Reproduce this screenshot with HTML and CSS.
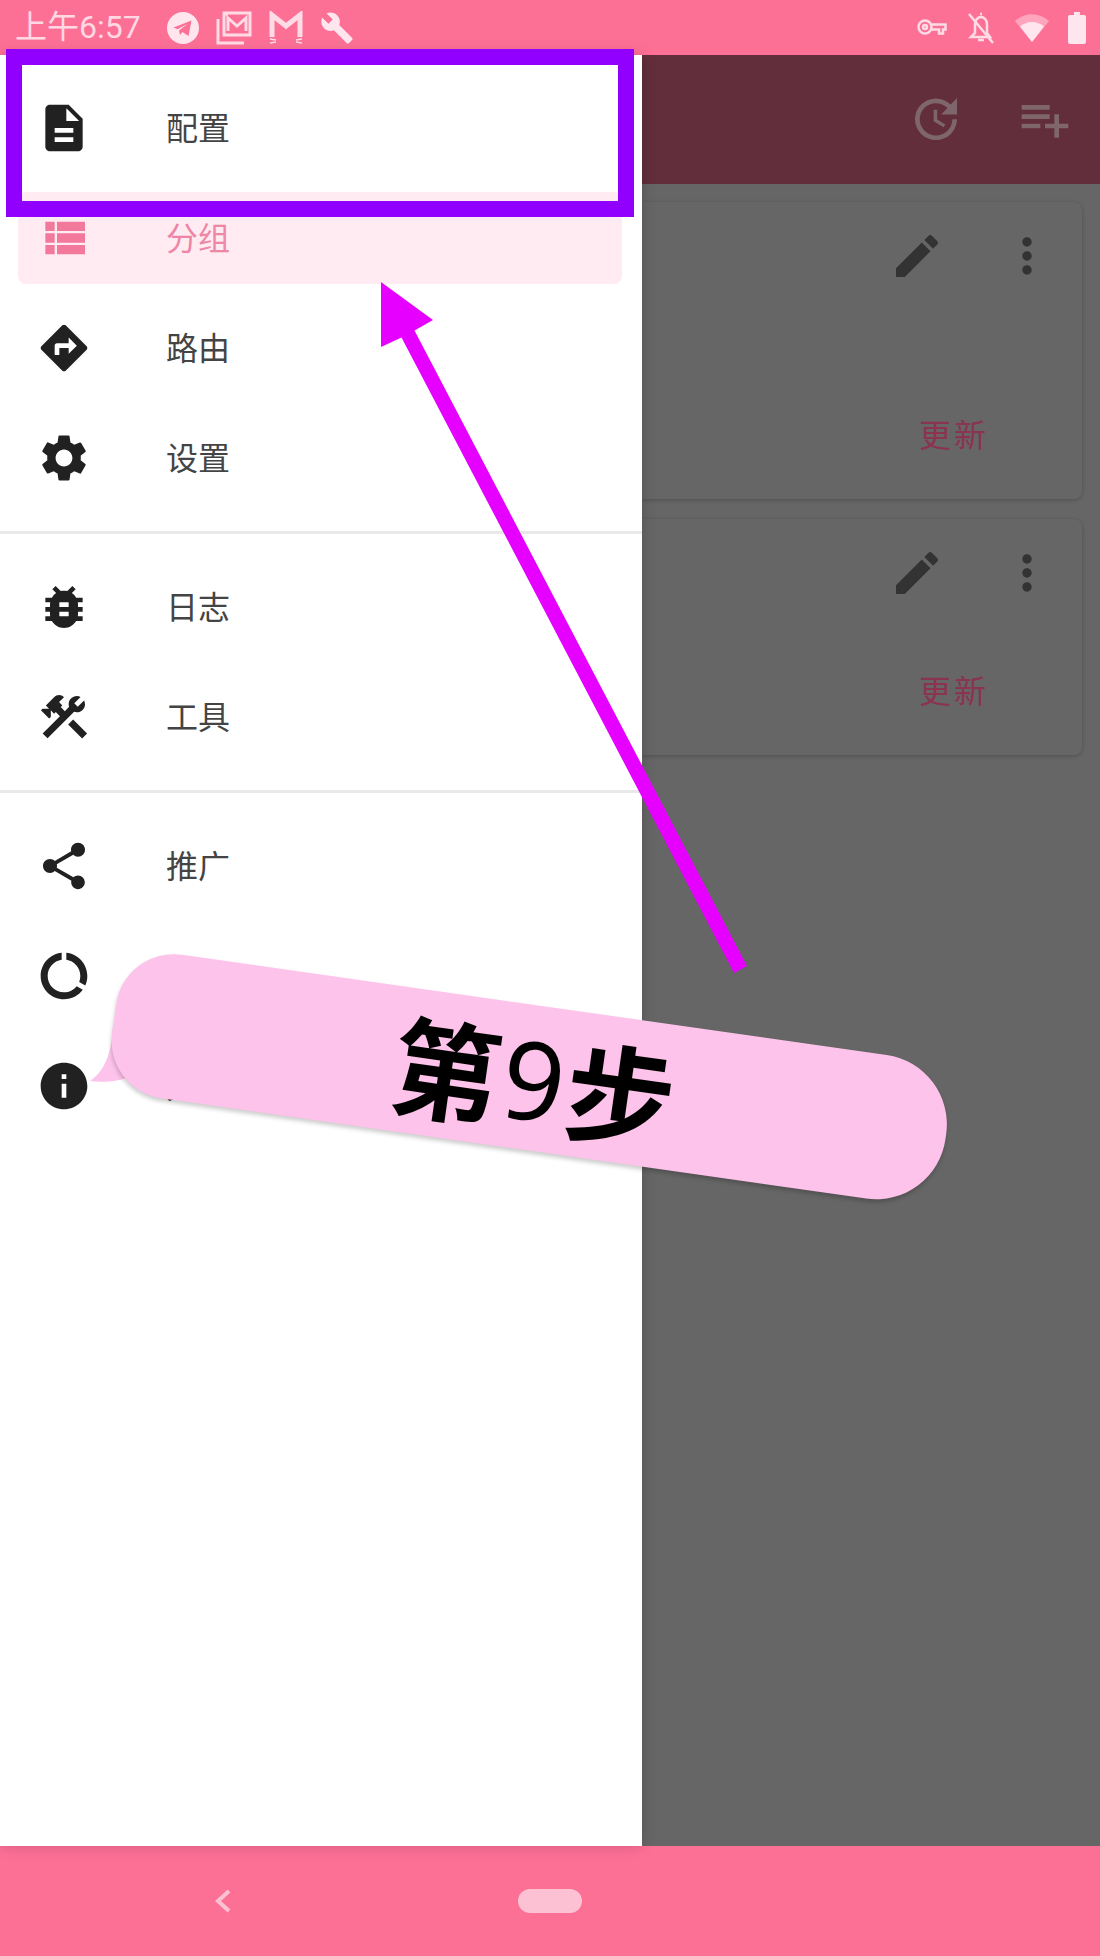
FILE: index.html
```html
<!DOCTYPE html>
<html lang="zh-CN">
<head>
  <meta charset="UTF-8">
  <meta name="viewport" content="width=device-width, initial-scale=1.0">
  <title>配置</title>
  <link rel="stylesheet" href="styles.css">
</head>
<body>

  <!-- status bar -->
  <div class="status-bar">
    <span class="clock">上午6:57</span>
    <div class="status-left">
      <svg class="st-icon" width="32" height="32" viewBox="0 0 32 32"><path fill-rule="evenodd" d="M16 0a16 16 0 1 0 0 32a16 16 0 1 0 0-32z M6.500 15.500 L24.500 8.500 L21.500 24 L15.500 20 L13 23 L12 18.500 L20.500 12 L10.500 17.200 Z"/></svg>
      <svg class="st-line" width="36" height="34" viewBox="0 0 36 34"><path d="M8 2h26v22H8zM8 3l4 0M12 20V7l9 8 9-8v13"/><path d="M2 8v24h26"/></svg>
      <svg class="st-line st-cat" width="34" height="34" viewBox="0 0 34 34"><path d="M3 26V4l14 11L31 4v22"/><path class="thin" d="M1 28l6 1M1 32l6-1M27 29l6-1M27 31l6 1"/></svg>
      <svg class="st-icon" width="34" height="34" viewBox="0 0 24 24"><path d="M22.700 19l-9.100-9.100c.9-2.300.4-5-1.500-6.900-2-2-5-2.400-7.400-1.300L9 6 6 9 1.600 4.700C.4 7.100.9 10.100 2.900 12.100c1.900 1.900 4.600 2.400 6.900 1.500l9.100 9.100c.4.4 1 .4 1.400 0l2.300-2.300c.5-.4.5-1.100.1-1.400z"/></svg>
    </div>
    <div class="status-right">
      <svg class="st-line st-key" width="30" height="20" viewBox="0 0 30 20"><circle cx="8" cy="9" r="6.500"/><circle cx="8" cy="9" r="2"/><path d="M14 6.500h14.500v5H26v4h-4v-4h-8"/></svg>
      <svg class="st-line st-bell" width="30" height="32" viewBox="0 0 30 32"><path d="M5 25h19l-3-4V12c0-4-3-7-6-7s-6 3-6 7v9zM12 28h6M14 2h2M3 2l24 29"/></svg>
      <svg class="st-wifi" width="34" height="28" viewBox="0 0 34 28"><path class="dim" d="M0 7C10-2 24-2 34 7L17 28z"/><path d="M5 12.500C12 6.500 22 6.500 29 12.500L17 28z"/></svg>
      <svg class="st-icon" width="18" height="32" viewBox="0 0 18 32"><path d="M6 0h6v3h4a2 2 0 0 1 2 2v25a2 2 0 0 1-2 2H2a2 2 0 0 1-2-2V5a2 2 0 0 1 2-2h4z"/></svg>
    </div>
  </div>

  <div class="main">

    <!-- drawer -->
    <div class="drawer">
      <div class="nav-section">
        <div class="nav-item">
          <svg class="nav-icon" viewBox="0 0 24 24"><path d="M14 2H6c-1.100 0-1.990.9-1.990 2L4 20c0 1.100.89 2 1.990 2H18c1.100 0 2-.9 2-2V8l-6-6zm2 16H8v-2h8v2zm0-4H8v-2h8v2zm-3-5V3.500L18.500 9H13z"/></svg>
          <span>配置</span>
        </div>
        <div class="nav-item active">
          <svg class="nav-icon" viewBox="0 0 24 24"><path d="M4 14h4v-4H4v4zm0 5h4v-4H4v4zM4 9h4V5H4v4zm5 5h12v-4H9v4zm0 5h12v-4H9v4zM9 5v4h12V5H9z"/></svg>
          <span>分组</span>
        </div>
        <div class="nav-item">
          <svg class="nav-icon" viewBox="0 0 24 24"><path d="M21.710 11.290l-9-9c-.39-.39-1.020-.39-1.410 0l-9 9c-.39.39-.39 1.020 0 1.410l9 9c.39.39 1.020.39 1.410 0l9-9c.39-.38.39-1.010 0-1.410zM14 14.500V12h-4v3H8v-4c0-.55.45-1 1-1h5V7.500l3.500 3.500-3.500 3.500z"/></svg>
          <span>路由</span>
        </div>
        <div class="nav-item">
          <svg class="nav-icon" viewBox="0 0 24 24"><path d="M19.140 12.940c.04-.3.06-.61.06-.94 0-.32-.02-.64-.07-.94l2.030-1.580c.18-.14.23-.41.12-.61l-1.920-3.320c-.12-.22-.37-.29-.59-.22l-2.390.96c-.5-.38-1.030-.7-1.620-.94l-.36-2.540c-.04-.24-.24-.41-.48-.41h-3.840c-.24 0-.43.17-.47.41l-.36 2.540c-.59.24-1.130.57-1.620.94l-2.390-.96c-.22-.08-.47 0-.59.22L2.740 8.870c-.12.21-.08.47.12.61l2.030 1.580c-.05.3-.09.63-.09.94s.02.64.07.94l-2.030 1.580c-.18.14-.23.41-.12.61l1.920 3.320c.12.22.37.29.59.22l2.390-.96c.5.38 1.030.7 1.620.94l.36 2.540c.05.24.24.41.48.41h3.840c.24 0 .44-.17.47-.41l.36-2.540c.59-.24 1.130-.56 1.620-.94l2.390.96c.22.08.47 0 .59-.22l1.920-3.320c.12-.22.07-.47-.12-.61l-2.010-1.580zM12 15.600c-1.980 0-3.600-1.620-3.600-3.600s1.620-3.600 3.600-3.600 3.600 1.620 3.600 3.600-1.620 3.600-3.600 3.600z"/></svg>
          <span>设置</span>
        </div>
      </div>

      <div class="nav-section">
        <div class="nav-item">
          <svg class="nav-icon" viewBox="0 0 24 24"><path d="M20 8h-2.810c-.45-.78-1.070-1.450-1.820-1.960L17 4.410 15.590 3l-2.170 2.170C12.960 5.060 12.490 5 12 5c-.49 0-.96.06-1.410.17L8.410 3 7 4.410l1.620 1.630C7.880 6.550 7.260 7.220 6.810 8H4v2h2.090c-.05.33-.09.66-.09 1v1H4v2h2v1c0 .34.04.67.09 1H4v2h2.810c1.040 1.790 2.970 3 5.190 3s4.150-1.210 5.190-3H20v-2h-2.090c.05-.33.09-.66.09-1v-1h2v-2h-2v-1c0-.34-.04-.67-.09-1H20V8zm-6 8h-4v-2h4v2zm0-4h-4v-2h4v2z"/></svg>
          <span>日志</span>
        </div>
        <div class="nav-item">
          <svg class="nav-icon" viewBox="0 0 24 24"><path d="M13.783 15.172l2.121-2.121 5.996 5.996-2.121 2.121zM17.500 10c1.930 0 3.500-1.570 3.500-3.500 0-.58-.16-1.120-.41-1.600l-2.700 2.700-1.490-1.490 2.700-2.700c-.48-.25-1.020-.41-1.600-.41C15.570 3 14 4.570 14 6.500c0 .41.08.8.21 1.160l-1.850 1.850-1.780-1.780.71-.71-1.410-1.410L12 3.490c-1.170-1.170-3.070-1.170-4.240 0L4.220 7.030l1.410 1.410H2.810l-.71.71 3.540 3.540.71-.71V9.150l1.410 1.410.71-.71 1.780 1.780-7.410 7.410 2.120 2.120L16.340 9.790c.36.13.75.21 1.160.21z"/></svg>
          <span>工具</span>
        </div>
      </div>

      <div class="nav-section last">
        <div class="nav-item">
          <svg class="nav-icon" viewBox="0 0 24 24"><path d="M18 16.080c-.76 0-1.440.3-1.960.77L8.910 12.700c.05-.23.09-.46.09-.7s-.04-.47-.09-.7l7.050-4.110c.54.5 1.250.81 2.040.81 1.660 0 3-1.340 3-3s-1.340-3-3-3-3 1.340-3 3c0 .24.04.47.09.7L8.040 9.810C7.500 9.310 6.790 9 6 9c-1.660 0-3 1.340-3 3s1.340 3 3 3c.79 0 1.500-.31 2.040-.81l7.120 4.160c-.05.21-.08.43-.08.65 0 1.610 1.310 2.920 2.920 2.920 1.610 0 2.920-1.310 2.920-2.920s-1.310-2.920-2.920-2.920z"/></svg>
          <span>推广</span>
        </div>
        <div class="nav-item">
          <svg class="nav-icon" viewBox="0 0 24 24"><path d="M13 2.050v3.030c3.390.49 6 3.390 6 6.920 0 .9-.18 1.750-.48 2.540l2.600 1.530c.56-1.240.88-2.620.88-4.070 0-5.180-3.950-9.450-9-9.950zM12 19c-3.870 0-7-3.130-7-7 0-3.530 2.610-6.430 6-6.920V2.050c-5.060.5-9 4.760-9 9.950 0 5.520 4.470 10 9.990 10 3.310 0 6.240-1.610 8.060-4.090l-2.600-1.530C16.170 17.980 14.210 19 12 19z"/></svg>
          <span>流量</span>
        </div>
        <div class="nav-item">
          <svg class="nav-icon" viewBox="0 0 24 24"><path d="M12 2C6.480 2 2 6.480 2 12s4.480 10 10 10 10-4.480 10-10S17.520 2 12 2zm1 15h-2v-6h2v6zm0-8h-2V7h2v2z"/></svg>
          <span>关于</span>
        </div>
      </div>
    </div>

    <!-- page behind the drawer, dimmed -->
    <div class="content">
      <div class="app-bar">
        <svg class="bar-icon" viewBox="0 0 24 24"><path d="M21 10.120h-6.780l2.740-2.820c-2.730-2.700-7.150-2.800-9.880-.1-2.730 2.710-2.730 7.080 0 9.790s7.150 2.710 9.880 0C18.320 15.650 19 14.080 19 12.100h2c0 1.980-.88 4.550-2.640 6.290-3.510 3.480-9.210 3.480-12.720 0-3.500-3.470-3.530-9.110-.02-12.580s9.140-3.470 12.650 0L21 3v7.120zM12.500 8v4.250l3.500 2.080-.72 1.210L11 13V8h1.500z"/></svg>
        <svg class="bar-icon" viewBox="0 0 24 24"><path d="M14 10H2v2h12v-2zm0-4H2v2h12V6zm4 8v-4h-2v4h-4v2h4v4h2v-4h4v-2h-4zM2 16h8v-2H2v2z"/></svg>
      </div>

      <div class="card-list">
        <div class="card tall">
          <div class="card-icons">
            <svg class="card-icon" viewBox="0 0 24 24"><path d="M3 17.250V21h3.750L17.810 9.940l-3.750-3.750L3 17.250zM20.710 7.040c.39-.39.39-1.020 0-1.410l-2.340-2.340c-.39-.39-1.020-.39-1.410 0l-1.830 1.830 3.750 3.750 1.830-1.830z"/></svg>
            <svg class="card-icon" viewBox="0 0 24 24"><path d="M12 8c1.100 0 2-.9 2-2s-.9-2-2-2-2 .9-2 2 .9 2 2 2zm0 2c-1.100 0-2 .9-2 2s.9 2 2 2 2-.9 2-2-.9-2-2-2zm0 6c-1.100 0-2 .9-2 2s.9 2 2 2 2-.9 2-2-.9-2-2-2z"/></svg>
          </div>
          <div class="card-action">更新</div>
        </div>
        <div class="card short">
          <div class="card-icons">
            <svg class="card-icon" viewBox="0 0 24 24"><path d="M3 17.250V21h3.750L17.810 9.940l-3.750-3.750L3 17.250zM20.710 7.040c.39-.39.39-1.020 0-1.410l-2.340-2.340c-.39-.39-1.020-.39-1.410 0l-1.830 1.830 3.750 3.750 1.830-1.830z"/></svg>
            <svg class="card-icon" viewBox="0 0 24 24"><path d="M12 8c1.100 0 2-.9 2-2s-.9-2-2-2-2 .9-2 2 .9 2 2 2zm0 2c-1.100 0-2 .9-2 2s.9 2 2 2 2-.9 2-2-.9-2-2-2zm0 6c-1.100 0-2 .9-2 2s.9 2 2 2 2-.9 2-2-.9-2-2-2z"/></svg>
          </div>
          <div class="card-action">更新</div>
        </div>
      </div>
    </div>
  </div>

  <!-- navigation bar -->
  <div class="nav-bar">
    <svg class="nav-back" width="16" height="24" viewBox="0 0 16 24"><path d="M14 2L3 12l11 10"/></svg>
    <div class="nav-pill"></div>
  </div>

  <!-- tutorial marks drawn on top of the screenshot -->
  <div class="mark-box"></div>
  <svg class="mark-art" width="1100" height="1956" viewBox="0 0 1100 1956">
    <path class="arrow" d="M381 282L433 320L414.500 330.500L747 966L734 973L401.500 337.500L381 347Z"/>
    <path class="tail" d="M90 1081C102 1073 112 1057 113 1025L160 1085L131 1076C122 1081 104 1083 90 1081Z"/>
  </svg>
  <div class="bubble"><b>第</b><i>9</i><b>步</b></div>

</body>
</html>
```
FILE: styles.css
```css
body {
  margin: 0;
  width: 1100px;
  height: 1956px;
  display: flex;
  flex-direction: column;
  position: relative;
  overflow: hidden;
  background: #666666;
  font-family: "Noto Sans CJK SC", "Noto Sans", sans-serif;
}

/* status bar */
.status-bar {
  height: 55px;
  flex: none;
  display: flex;
  align-items: center;
  padding: 0 14px 0 15px;
  background: #fd7096;
}

.clock {
  font-family: "Roboto", "Noto Sans CJK SC", sans-serif;
  font-size: 32px;
  line-height: 50px;
  margin: 0 26px 2px 0;
  color: #ffd8e3;
}

.status-left {
  display: flex;
  align-items: center;
  gap: 17px;
}

.status-right {
  display: flex;
  align-items: center;
  gap: 19px;
  margin-left: auto;
}

.st-icon {
  fill: #ffe6ee;
}

.st-line {
  fill: none;
  stroke: #ffdbe6;
  stroke-width: 3;
}

.st-cat {
  stroke-width: 5;
}

.st-cat .thin {
  stroke-width: 1.500;
}

.st-key,
.st-bell {
  stroke-width: 2.500;
}

.st-wifi {
  fill: #ffe6ee;
}

.st-wifi .dim {
  opacity: 0.45;
}

/* main area */
.main {
  flex: 1;
  display: flex;
  min-height: 0;
}

.drawer {
  width: 642px;
  flex: none;
  background: #ffffff;
  box-shadow: 0 0 14px rgba(0, 0, 0, 0.18);
  position: relative;
  z-index: 1;
}

.nav-section {
  display: flex;
  flex-direction: column;
  gap: 18px;
  padding: 27px 20px 27px 18px;
  border-bottom: 3px solid #e9e9e9;
}

.nav-section.last {
  border-bottom: none;
}

.nav-item {
  height: 92px;
  display: flex;
  align-items: center;
  gap: 74px;
  padding-left: 18px;
  border-radius: 8px;
  font-size: 32px;
  color: #444444;
}

.nav-item span {
  margin-bottom: 5px;
}

.nav-icon {
  width: 56px;
  height: 56px;
  flex: none;
  fill: #212121;
}

.nav-item.active {
  background: #ffebf1;
  color: #ee86a6;
}

.nav-item.active .nav-icon {
  fill: #f2789c;
}

/* dimmed page */
.content {
  flex: 1;
  min-width: 0;
}

.app-bar {
  height: 129px;
  display: flex;
  justify-content: flex-end;
  align-items: center;
  gap: 53px;
  padding: 0 27px 2px 0;
  box-sizing: border-box;
  background: #632e3b;
}

.bar-icon {
  width: 56px;
  height: 56px;
  fill: #7f666c;
}

.card-list {
  display: flex;
  flex-direction: column;
  gap: 20px;
  padding: 18px 18px 0 0;
}

.card {
  display: flex;
  flex-direction: column;
  justify-content: space-between;
  padding: 26px 27px 44px 0;
  box-sizing: border-box;
  border-radius: 0 8px 8px 0;
  background: #666666;
  box-shadow: 0 1px 4px rgba(0, 0, 0, 0.22);
}

.card.tall {
  height: 297px;
}

.card.short {
  height: 236px;
}

.card-icons {
  display: flex;
  justify-content: flex-end;
  gap: 54px;
}

.card-icon {
  width: 56px;
  height: 56px;
  fill: #333333;
}

.card-action {
  align-self: flex-end;
  margin-right: 66px;
  font-size: 32px;
  line-height: 44px;
  letter-spacing: 3px;
  color: #8a3450;
}

/* navigation bar */
.nav-bar {
  height: 110px;
  flex: none;
  display: flex;
  align-items: center;
  gap: 287px;
  padding-left: 215px;
  background: #fd7096;
}

.nav-back {
  fill: none;
  stroke: #fcc1d3;
  stroke-width: 4;
}

.nav-pill {
  width: 64px;
  height: 24px;
  border-radius: 12px;
  background: #fcc1d3;
}

/* tutorial marks */
.mark-box {
  position: absolute;
  left: 6px;
  top: 49px;
  width: 628px;
  height: 168px;
  box-sizing: border-box;
  border: 16px solid #9100ff;
  z-index: 2;
}

.mark-art {
  position: absolute;
  left: 0;
  top: 0;
  z-index: 2;
}

.arrow {
  fill: #e600ff;
}

.tail {
  fill: #fdc3ea;
}

.bubble {
  position: absolute;
  left: 110px;
  top: 1005px;
  width: 840px;
  height: 145px;
  padding-left: 8px;
  box-sizing: border-box;
  border-radius: 58px 70px 70px 58px;
  display: flex;
  align-items: center;
  justify-content: center;
  gap: 2px;
  background: #fdc3ea;
  box-shadow: 0 3px 4px rgba(0, 0, 0, 0.2);
  transform: rotate(8.100deg);
  z-index: 2;
  font-size: 109px;
  line-height: 145px;
  color: #000000;
}

.bubble b {
  font-weight: 700;
}

.bubble i {
  font-family: "Noto Sans", sans-serif;
  font-style: normal;
  font-weight: 400;
}
```
